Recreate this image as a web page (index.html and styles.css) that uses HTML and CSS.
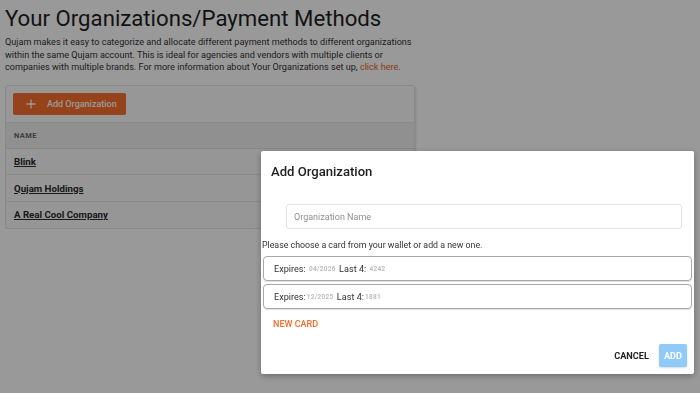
FILE: index.html
```html
<!DOCTYPE html>
<html lang="en">
<head>
<meta charset="utf-8">
<title>Your Organizations/Payment Methods</title>
<link rel="stylesheet" href="styles.css">
</head>
<body>
<main class="page">
  <h1 class="title">Your Organizations/Payment Methods</h1>
  <p class="intro">Qujam makes it easy to categorize and allocate different payment methods to different organizations within the same Qujam account. This is ideal for agencies and vendors with multiple clients or companies with multiple brands. For more information about Your Organizations set up, <a class="link" href="#">click here</a>.</p>
  <section class="card">
    <div class="toolbar">
      <button class="btn-add" type="button">
        <svg class="plus" width="10" height="10" viewBox="0 0 10 10"><path d="M5 0.5V9.5M0.5 5H9.5" stroke="#fff" stroke-width="1.3" fill="none"/></svg>
        <span>Add Organization</span>
      </button>
    </div>
    <div class="thead">NAME</div>
    <div class="row"><a class="org" href="#">Blink</a></div>
    <div class="row"><a class="org" href="#">Qujam Holdings</a></div>
    <div class="row last"><a class="org" href="#">A Real Cool Company</a></div>
  </section>
</main>
<div class="overlay"></div>
<div class="dialog">
  <h2 class="dialog-title">Add Organization</h2>
  <div class="field"><input class="input" type="text" placeholder="Organization Name"></div>
  <p class="hint">Please choose a card from your wallet or add a new one.</p>
  <div class="cards">
    <div class="option">Expires: <span class="redact">04/2026</span> Last 4: <span class="redact">4242</span></div>
    <div class="option">Expires:<span class="redact">12/2025</span> Last 4:<span class="redact">1881</span></div>
  </div>
  <div class="newcard">NEW CARD</div>
  <div class="actions">
    <button class="btn-cancel" type="button">CANCEL</button>
    <button class="btn-ok" type="button">ADD</button>
  </div>
</div>
</body>
</html>
```
FILE: styles.css
```css
* { box-sizing: border-box; }
html, body { margin: 0; padding: 0; background: #fff; }
body { font-family: Roboto, "Liberation Sans", sans-serif; color: #222; }

.page { width: 420px; padding: 5px 5px 0 5px; }

.title {
  margin: 0;
  font-size: 22.2px;
  line-height: 27px;
  font-weight: 400;
  color: #1e1e1e;
  white-space: nowrap;
}

.intro {
  margin: 4px 0 0 0;
  width: 412px;
  font-size: 9.1px;
  line-height: 12.7px;
  color: #333;
}
.link { color: #e8641f; text-decoration: none; }

.card {
  margin-top: 11px;
  width: 410px;
  background: #fafafa;
  border: 1px solid #e4e4e4;
  border-radius: 3px;
  box-shadow: 1px 1px 2px rgba(0,0,0,0.12);
  overflow: hidden;
}
.toolbar { padding: 7px 7px 7px 7px; background: #fcfcfc; }
.btn-add {
  display: flex;
  align-items: center;
  gap: 11px;
  height: 22px;
  width: 113px;
  padding: 0 0 0 13px;
  border: 0;
  border-radius: 2px;
  background: #fa6f2c;
  color: #fff;
  font-family: Roboto, "Liberation Sans", sans-serif;
  font-size: 9px;
  font-weight: 500;
}
.plus { flex: none; }

.thead {
  height: 27px;
  display: flex;
  align-items: center;
  padding-left: 8px;
  background: #f1f1f1;
  border-top: 1px solid #e6e6e6;
  border-bottom: 1px solid #e2e2e2;
  font-size: 7.5px;
  font-weight: 700;
  letter-spacing: 0.4px;
  color: #666;
}
.row {
  height: 26.3px;
  display: flex;
  align-items: center;
  padding-left: 8px;
  border-bottom: 1px solid #e6e6e6;
}
.row.last { border-bottom: 0; }
.org {
  font-size: 9.7px;
  font-weight: 700;
  color: #2a2a2a;
  text-decoration: underline;
}

.overlay {
  position: fixed;
  left: 0; top: 0;
  width: 100%;
  height: 393px;
  background: rgba(0,0,0,0.4);
}

.dialog {
  position: fixed;
  left: 261px;
  top: 151px;
  width: 433px;
  height: 223px;
  background: #fff;
  border-radius: 2px;
  box-shadow: 0 2px 6px rgba(0,0,0,0.3);
  display: flex;
  flex-direction: column;
}
.dialog-title {
  margin: 0;
  padding: 13px 10px 0 10px;
  font-size: 13.1px;
  line-height: 16px;
  font-weight: 500;
  color: #222;
}
.field { padding: 24px 12px 0 25px; }
.input {
  display: block;
  width: 100%;
  height: 25px;
  border: 1px solid #e2e2e2;
  border-radius: 3px;
  padding: 0 7px;
  font-family: Roboto, "Liberation Sans", sans-serif;
  font-size: 9px;
  color: #333;
  outline: none;
}
.input::placeholder { color: #8f8f8f; }
.hint {
  margin: 10px 0 0 1px;
  font-size: 8.8px;
  line-height: 12px;
  color: #333;
}
.cards {
  display: flex;
  flex-direction: column;
  gap: 3px;
  padding: 5px 2px 0 2px;
}
.option {
  height: 25px;
  display: flex;
  align-items: center;
  padding-left: 10px;
  border: 1px solid #a8a8a8;
  border-radius: 4px;
  box-shadow: 0 1px 1px rgba(0,0,0,0.12);
  font-size: 9.1px;
  color: #333;
  white-space: pre;
}
.redact {
  color: #bdbdbd;
  font-size: 6.5px;
  font-weight: 700;
  letter-spacing: 0.3px;
  filter: blur(0.3px);
  padding: 0 1px;
}
.newcard {
  margin: 9px 0 0 12px;
  font-size: 9px;
  line-height: 12px;
  font-weight: 500;
  color: #fa6a28;
}
.actions {
  margin-top: auto;
  display: flex;
  justify-content: flex-end;
  align-items: center;
  gap: 10px;
  padding: 0 7px 7px 0;
}
.btn-cancel {
  border: 0;
  background: transparent;
  padding: 0;
  font-family: Roboto, "Liberation Sans", sans-serif;
  font-size: 9.2px;
  font-weight: 700;
  color: #222;
}
.btn-ok {
  width: 28px;
  height: 23px;
  border: 0;
  border-radius: 2px;
  background: #90caf9;
  color: #fff;
  padding: 0;
  font-family: Roboto, "Liberation Sans", sans-serif;
  font-size: 9.2px;
  font-weight: 700;
  box-shadow: 0 1px 2px rgba(0,0,0,0.15);
}
```
